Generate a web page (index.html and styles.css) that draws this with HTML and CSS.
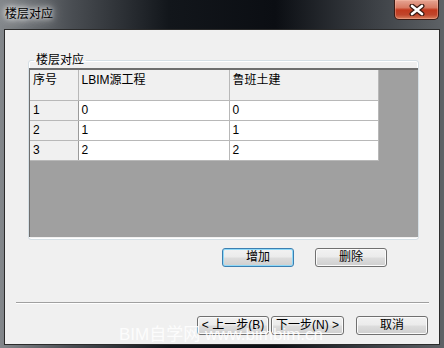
FILE: index.html
```html
<!DOCTYPE html>
<html lang="zh-CN">
<head>
    <meta charset="UTF-8">
    <title>楼层对应</title>
    <link rel="stylesheet" href="styles.css">
</head>
<body>

<div class="window">
    <div class="titlebar">
        <span class="title">楼层对应</span>
        <button class="close" aria-label="关闭">
            <svg width="16" height="12" viewBox="0 0 16 12">
                <path d="M3 2 L13 10 M13 2 L3 10" stroke="#3b1a12" stroke-width="5" stroke-linecap="round"/>
                <path d="M3 2 L13 10 M13 2 L3 10" stroke="#ffffff" stroke-width="2.6" stroke-linecap="round"/>
            </svg>
        </button>
    </div>

    <div class="client">
        <fieldset class="group">
            <legend>楼层对应</legend>
            <div class="grid">
                <table>
                    <thead>
                        <tr>
                            <th class="col-num">序号</th>
                            <th class="col-src">LBIM源工程</th>
                            <th class="col-dst">鲁班土建</th>
                        </tr>
                    </thead>
                    <tbody>
                        <tr><td class="row-head">1</td><td>0</td><td>0</td></tr>
                        <tr><td class="row-head">2</td><td>1</td><td>1</td></tr>
                        <tr><td class="row-head">3</td><td>2</td><td>2</td></tr>
                    </tbody>
                </table>
            </div>
        </fieldset>

        <div class="edit-buttons">
            <button class="btn focused">增加</button>
            <button class="btn">删除</button>
        </div>

        <hr class="sep">

        <div class="nav-buttons">
            <button class="btn">&lt; 上一步(B)</button>
            <button class="btn next">下一步(N) &gt;</button>
            <button class="btn cancel">取消</button>
        </div>
    </div>

    <div class="watermark">BIM自学网 www.bimbim.cn</div>
</div>

</body>
</html>
```

FILE: styles.css
```css
body {
    margin: 0;
    font-family: "Liberation Sans", "Noto Sans CJK SC", sans-serif;
    font-size: 12px;
}

.window {
    position: relative;
    width: 444px;
    height: 348px;
    background: linear-gradient(90deg, #83878b 0%, #4a4e53 16%, #12161b 38%, #0b0e13 62%, #3c4045 84%, #5e6266 100%);
    overflow: hidden;
}

.titlebar {
    height: 29px;
    display: flex;
    justify-content: space-between;
    align-items: flex-start;
}

.title {
    padding: 6px 0 0 5px;
    line-height: 16px;
    color: #000;
    text-shadow: 0 0 5px #fff, 0 0 9px rgba(255, 255, 255, 0.9), 0 0 14px rgba(255, 255, 255, 0.6);
}

.close {
    width: 45px;
    height: 20px;
    margin-right: 5px;
    padding: 0;
    border: 1px solid #3a1a14;
    border-top: none;
    border-radius: 0 0 5px 5px;
    background: linear-gradient(#e6a593 0%, #d77a63 40%, #c2391e 52%, #c0452b 78%, #d8805f 100%);
    box-shadow: inset 0 0 0 1px rgba(255, 200, 180, 0.35);
    display: flex;
    align-items: center;
    justify-content: center;
}

.client {
    margin: 0 4px;
    height: 316px;
    box-sizing: border-box;
    border: 1px solid #2b2b2b;
    background-color: #f0f0f0;
}

.group {
    margin: 22px 0 0 23px;
    width: 391px;
    box-sizing: border-box;
    padding: 0 0 2px 0;
    border: 1px solid #d5dfe5;
    border-radius: 3px;
    box-shadow: inset 0 0 0 1px #fff;
}

.group legend {
    margin-left: 5px;
    padding: 0 2px;
    line-height: 16px;
    color: #000;
}

.grid {
    height: 169px;
    box-sizing: border-box;
    background-color: #a0a0a0;
    border-top: 2px solid #6f6f6f;
    border-left: 1px solid #6f6f6f;
}

table {
    border-collapse: collapse;
    table-layout: fixed;
    width: 348px;
    color: #000;
}

th, td {
    box-sizing: border-box;
    border: 1px solid #b8b8b8;
    text-align: left;
    font-weight: normal;
    line-height: 14px;
    white-space: nowrap;
}

th:first-child, td:first-child {
    border-left: none;
}

thead th {
    border-top: none;
    height: 30px;
    padding: 3px 3px 0;
    vertical-align: top;
    background-color: #f0f0f0;
}

.col-num { width: 48px; }
.col-src { width: 151px; }
.col-dst { width: 149px; }

tbody td {
    height: 20px;
    padding: 0 3px;
    vertical-align: middle;
    background-color: #fff;
}

tbody td.row-head {
    background-color: #f0f0f0;
    border-right-color: #9a9a9a;
}

.edit-buttons {
    display: flex;
    gap: 21px;
    margin-top: 8px;
    padding-left: 217px;
}

.btn {
    width: 72px;
    height: 19px;
    box-sizing: border-box;
    padding: 0;
    border: 1px solid #707070;
    border-radius: 3px;
    background: linear-gradient(#f2f2f2 0%, #ebebeb 48%, #dddddd 52%, #cfcfcf 100%);
    box-shadow: inset 0 0 0 1px #fbfbfb;
    font-family: "Liberation Sans", "Noto Sans CJK SC", sans-serif;
    font-size: 12px;
    line-height: 17px;
    color: #000;
}

.btn.focused {
    border-color: #3c7fb1;
    box-shadow: inset 0 0 0 1px #8fd9f8;
}

.sep {
    margin: 35px 10px 0 11px;
    height: 0;
    border: none;
    border-top: 1px solid #a0a0a0;
    border-bottom: 1px solid #fff;
}

.nav-buttons {
    display: flex;
    gap: 2px;
    margin-top: 12px;
    padding-left: 192px;
}

.btn.next {
    width: 73px;
}

.btn.cancel {
    margin-left: 10px;
}

.watermark {
    position: absolute;
    left: 119px;
    top: 325px;
    font-family: "Liberation Sans", "Noto Sans CJK SC", sans-serif;
    font-size: 17px;
    line-height: 20px;
    color: rgba(255, 255, 255, 0.85);
    white-space: nowrap;
    pointer-events: none;
}
```
